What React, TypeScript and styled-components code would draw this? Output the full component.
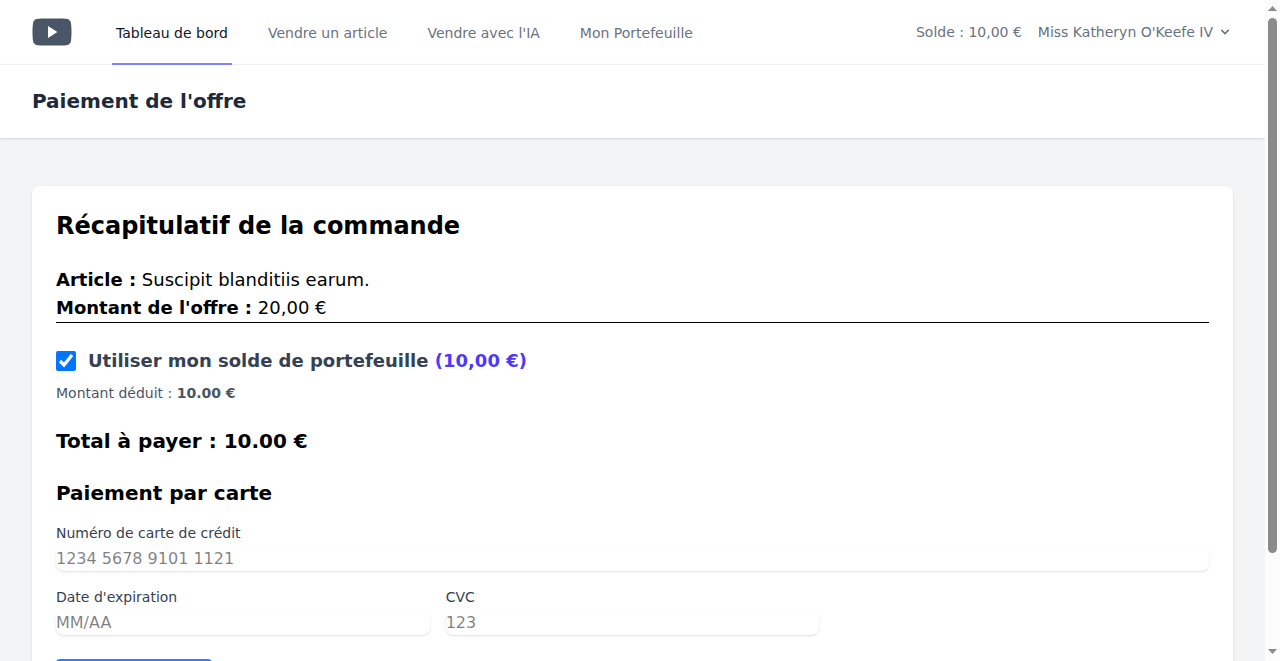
import React from "react";
import styled, { createGlobalStyle } from "styled-components";

const Global = createGlobalStyle`
  *, *::before, *::after { box-sizing: border-box; }
  html, body { margin: 0; padding: 0; height: 100%; overflow: hidden; background: #fff; }
  body { font-family: "DejaVu Sans", sans-serif; font-size: 16px; line-height: 24px; color: #000; }
  h1, h2, h3, p { margin: 0; }
`;

const Viewport = styled.div`
  display: flex;
  height: 661px;
  overflow: hidden;
`;

const Page = styled.div`
  flex: 1;
  min-width: 0;
  height: 661px;
  overflow: hidden;
  background: #f3f4f6;
`;

const Nav = styled.nav`
  display: flex;
  justify-content: space-between;
  height: 65px;
  padding: 0 32px;
  background: #fff;
  border-bottom: 1px solid #f3f4f6;
`;

const NavGroup = styled.div<{ $gap: number }>`
  display: flex;
  align-items: center;
  gap: ${(p) => p.$gap}px;
`;

const Links = styled.div`
  display: flex;
  gap: 32px;
  height: 66px;
  margin: -1px 0;
`;

const NavLink = styled.a<{ $active?: boolean }>`
  display: inline-flex;
  align-items: center;
  padding: 4px 4px 0;
  font-size: 14px;
  line-height: 20px;
  white-space: nowrap;
  color: ${(p) => (p.$active ? "#101828" : "#6a7282")};
  border-bottom: 2px solid ${(p) => (p.$active ? "#7c86ff" : "transparent")};
`;

const Account = styled.span`
  display: inline-flex;
  align-items: center;
  gap: 4px;
  font-size: 14px;
  line-height: 20px;
  white-space: nowrap;
  color: #6a7282;
`;

const Header = styled.header`
  position: relative;
  padding: 24px 32px;
  background: #fff;
  box-shadow: 0 1px 3px 0 rgba(0, 0, 0, 0.1), 0 1px 2px -1px rgba(0, 0, 0, 0.1);
`;

const PageTitle = styled.h1`
  font-size: 20px;
  line-height: 25px;
  color: #1e2939;
`;

const Main = styled.main`
  padding: 48px 32px;
`;

const Card = styled.section`
  padding: 24px;
  height: 560px;
  background: #fff;
  border-radius: 8px;
  box-shadow: 0 1px 3px 0 rgba(0, 0, 0, 0.1), 0 1px 2px -1px rgba(0, 0, 0, 0.1);
`;

const CardTitle = styled.h2`
  margin-bottom: 24px;
  font-size: 24px;
  line-height: 32px;
`;

const Summary = styled.div`
  margin-bottom: 24px;
  font-size: 18px;
  line-height: 28px;
  border-bottom: 1px solid #000;
`;

const WalletOption = styled.label`
  display: flex;
  align-items: center;
  gap: 12px;
  font-size: 18px;
  line-height: 28px;
  font-weight: 700;
  color: #364153;
`;

const Checkbox = styled.input`
  width: 20px;
  height: 20px;
  margin: 0;
`;

const Balance = styled.span`
  color: #4f39f6;
`;

const Deducted = styled.p`
  margin-top: 8px;
  font-size: 14px;
  line-height: 20px;
  color: #4a5565;
`;

const Subtitle = styled.h3`
  margin-top: 24px;
  font-size: 20px;
  line-height: 28px;
`;

const Fields = styled.div`
  display: grid;
  grid-template-columns: repeat(3, 1fr);
  gap: 16px;
  margin-top: 16px;
`;

const Field = styled.div<{ $wide?: boolean }>`
  grid-column: ${(p) => (p.$wide ? "1 / -1" : "auto")};
`;

const Label = styled.label`
  display: block;
  font-size: 14px;
  line-height: 20px;
  color: #364153;
`;

const Input = styled.input`
  display: block;
  width: 100%;
  height: 24px;
  margin: 4px 0 0;
  padding: 0;
  border: 0;
  border-radius: 8px;
  background: transparent;
  font: inherit;
  box-shadow: 0 1px 3px 0 rgba(0, 0, 0, 0.1), 0 1px 2px -1px rgba(0, 0, 0, 0.1);
  &::placeholder { color: rgba(0, 0, 0, 0.5); }
`;

const PayButton = styled.button`
  display: block;
  width: 156px;
  height: 40px;
  margin-top: 24px;
  border: 0;
  border-radius: 4px;
  background: #2b7fff;
`;

const Scrollbar = styled.div`
  display: flex;
  flex-direction: column;
  align-items: center;
  width: 15px;
  padding: 6px 0 7px;
  background: #fcfcfc;
`;

const Thumb = styled.div`
  width: 9px;
  height: 535px;
  margin: 7px 0 auto;
  border-radius: 5px;
  background: #8b8b8b;
`;

const Logo = () => (
  <svg width="40" height="28" viewBox="0 0 40 28">
    <path
      d="M20 .4C28 .4 32.5 .4 34.4.7C37.2 1.1 38.6 2.6 39 5.2C39.3 7.6 39.5 10.5 39.5 14C39.5 17.5 39.3 20.4 39 22.8C38.6 25.4 37.2 26.9 34.4 27.3C32.5 27.6 28 27.6 20 27.6C12 27.6 7.5 27.6 5.6 27.3C2.8 26.9 1.4 25.4 1 22.8C.7 20.4.5 17.5.5 14C.5 10.5.7 7.6 1 5.2C1.4 2.6 2.8 1.1 5.6.7C7.5.4 12 .4 20 .4z"
      fill="#4a5565"
    />
    <path d="M16 8v12l9.4-6z" fill="#fff" />
  </svg>
);

const Chevron = () => (
  <svg width="16" height="16" viewBox="0 0 20 20" fill="currentColor">
    <path
      fillRule="evenodd"
      clipRule="evenodd"
      d="M5.293 7.293a1 1 0 011.414 0L10 10.586l3.293-3.293a1 1 0 111.414 1.414l-4 4a1 1 0 01-1.414 0l-4-4a1 1 0 010-1.414z"
    />
  </svg>
);

export default function App() {
  return (
    <>
      <Global />
      <Viewport>
        <Page>
          <Nav>
            <NavGroup $gap={40}>
              <Logo />
              <Links>
                <NavLink $active>Tableau de bord</NavLink>
                <NavLink>Vendre un article</NavLink>
                <NavLink>Vendre avec l'IA</NavLink>
                <NavLink>Mon Portefeuille</NavLink>
              </Links>
            </NavGroup>
            <NavGroup $gap={16}>
              <Account>Solde : 10,00 €</Account>
              <Account>
                Miss Katheryn O'Keefe IV
                <Chevron />
              </Account>
            </NavGroup>
          </Nav>
          <Header>
            <PageTitle>Paiement de l'offre</PageTitle>
          </Header>
          <Main>
            <Card>
              <CardTitle>Récapitulatif de la commande</CardTitle>
              <Summary>
                <p><strong>Article :</strong> Suscipit blanditiis earum.</p>
                <p><strong>Montant de l'offre :</strong> 20,00 €</p>
              </Summary>
              <WalletOption>
                <Checkbox type="checkbox" defaultChecked />
                <span>Utiliser mon solde de portefeuille <Balance>(10,00 €)</Balance></span>
              </WalletOption>
              <Deducted>Montant déduit : <strong>10.00 €</strong></Deducted>
              <Subtitle>Total à payer : 10.00 €</Subtitle>
              <Subtitle>Paiement par carte</Subtitle>
              <Fields>
                <Field $wide>
                  <Label>Numéro de carte de crédit</Label>
                  <Input placeholder="1234 5678 9101 1121" />
                </Field>
                <Field>
                  <Label>Date d'expiration</Label>
                  <Input placeholder="MM/AA" />
                </Field>
                <Field>
                  <Label>CVC</Label>
                  <Input placeholder="123" />
                </Field>
              </Fields>
              <PayButton type="button" />
            </Card>
          </Main>
        </Page>
        <Scrollbar>
          <svg width="9" height="5" viewBox="0 0 9 5"><path d="M0 5L4.5 0L9 5z" fill="#8b8b8b" /></svg>
          <Thumb />
          <svg width="9" height="5" viewBox="0 0 9 5"><path d="M0 0L4.5 5L9 0z" fill="#8b8b8b" /></svg>
        </Scrollbar>
      </Viewport>
    </>
  );
}
